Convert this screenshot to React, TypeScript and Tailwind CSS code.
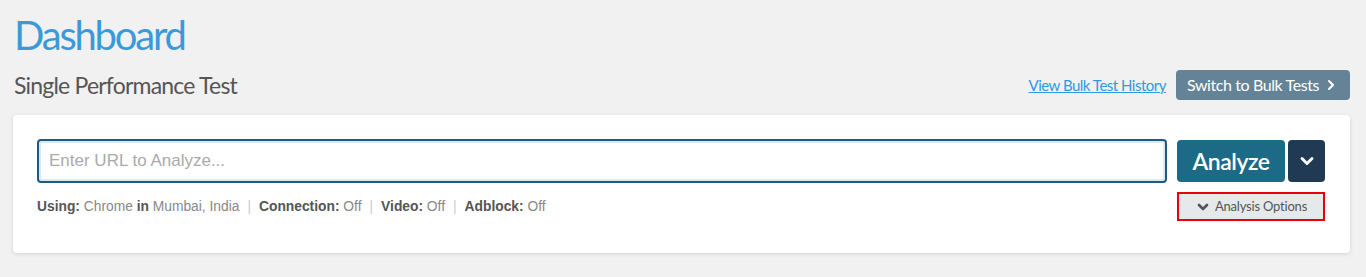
import { ChevronDown, ChevronRight } from 'lucide-react'

const head = { fontFamily: 'Lato, "Open Sans", sans-serif' }

export default function App() {
  return (
    <div className="min-h-screen bg-[#f1f1f1] pl-[13px] pr-[16px] pt-[12px] pb-[22px]" style={{ fontFamily: '"Liberation Sans", Arial, sans-serif' }}>
      {/* Header */}
      <h1 className="text-[40px] leading-[46px] tracking-[-2.2px] text-[#3a9ad9] pl-[1px]" style={head}>
        Dashboard
      </h1>
      <div className="flex items-center justify-between mt-[12px]">
        <h2 className="text-[23px] leading-[28px] tracking-[-0.8px] text-[#555] pl-[1px]" style={head}>
          Single Performance Test
        </h2>
        <div className="flex items-center">
          <a href="#" className="text-[15px] tracking-[-0.5px] text-[#2f9ae0] underline mr-[10px]" style={head}>
            View Bulk Test History
          </a>
          <button className="h-[30px] w-[174px] bg-[#648396] text-white text-[16px] tracking-[-0.4px] rounded-[4px] flex items-center justify-center gap-[4px]" style={head}>
            Switch to Bulk Tests
            <ChevronRight className="w-4 h-4" strokeWidth={3} />
          </button>
        </div>
      </div>

      {/* Card */}
      <div className="mt-[15px] bg-white rounded-[4px] shadow-[0_1px_4px_rgba(0,0,0,0.12)] pl-[24px] pr-[25px] pt-[24px] pb-[32px]">
        <div className="flex items-start">
          <div className="flex-1 flex flex-col">
            <input
              placeholder="Enter URL to Analyze..."
              className="h-[44px] w-full border-2 border-[#1d5a80] rounded-[4px] px-[10px] text-[17px] text-[#333] placeholder:text-[#aaa] shadow-[inset_0_0_0_2px_#dfe6ec] outline-none"
            />
            <div className="mt-[14px] text-[13.8px] text-[#888] flex items-center">
              <b className="text-[#555]">Using:</b>&nbsp;Chrome&nbsp;<b className="text-[#555]">in</b>&nbsp;Mumbai, India
              <span className="mx-[8px] text-[#ccc]">|</span>
              <b className="text-[#555]">Connection:</b>&nbsp;Off
              <span className="mx-[8px] text-[#ccc]">|</span>
              <b className="text-[#555]">Video:</b>&nbsp;Off
              <span className="mx-[8px] text-[#ccc]">|</span>
              <b className="text-[#555]">Adblock:</b>&nbsp;Off
            </div>
          </div>
          <div className="ml-[10px] w-[148px] flex flex-col">
            <div className="flex mt-[1px]">
              <button className="h-[42px] w-[108px] bg-[#1d6a87] text-white text-[23px] tracking-[-0.5px] font-semibold rounded-[4px]" style={head}>
                Analyze
              </button>
              <button className="ml-[3px] h-[42px] w-[37px] bg-[#1f3a52] text-white rounded-[4px] flex items-center justify-center">
                <ChevronDown className="w-5 h-5" strokeWidth={3.5} />
              </button>
            </div>
            <button className="mt-[10px] h-[29px] w-[148px] border-2 border-[#e8000b] bg-[#e6e9ec] text-[#555] text-[13px] tracking-[-0.2px] flex items-center justify-center gap-[4px]" style={head}>
              <ChevronDown className="w-4 h-4 text-[#555]" strokeWidth={4} />
              Analysis Options
            </button>
          </div>
        </div>
      </div>
    </div>
  )
}
